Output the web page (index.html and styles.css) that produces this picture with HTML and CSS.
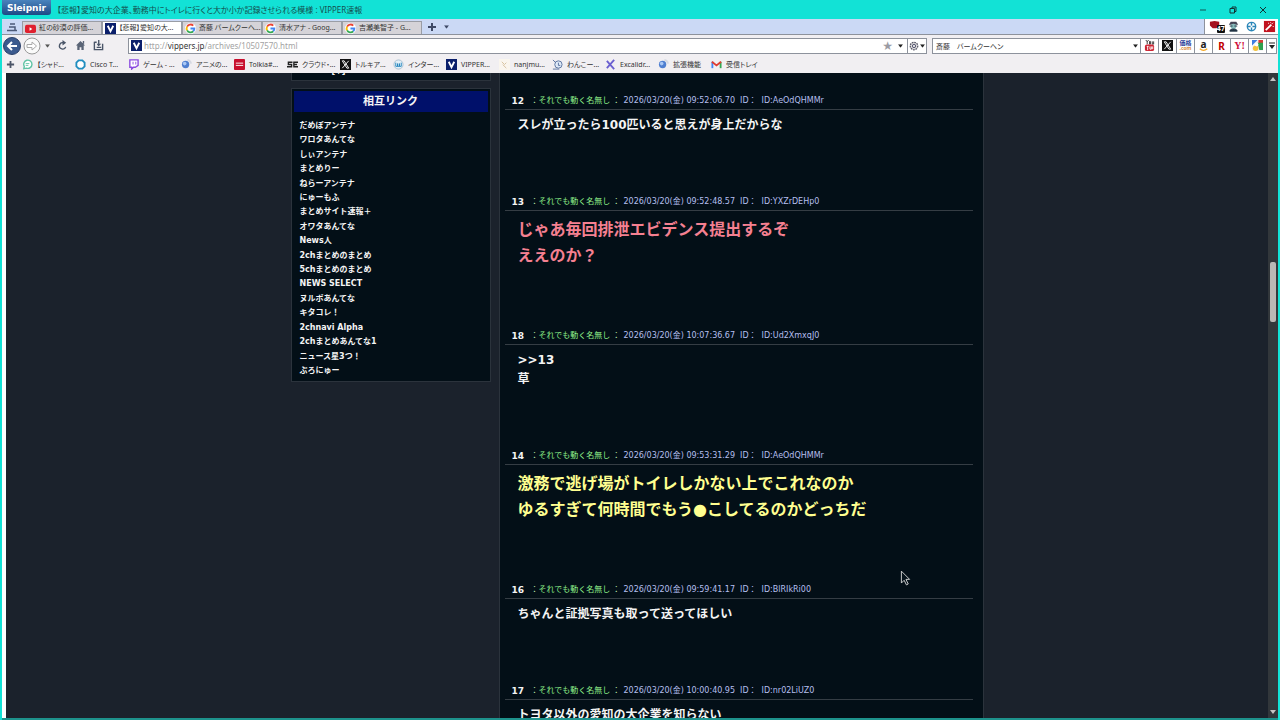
FILE: index.html
```
<!DOCTYPE html>
<html lang="ja">
<head>
    <meta charset="UTF-8">
    <meta name="viewport" content="width=device-width, initial-scale=1.0">
    <title>【悲報】愛知の大企業、勤務中にトイレに行くと大か小か記録させられる模様 : VIPPER速報</title>
    <link rel="stylesheet" href="styles.css">
</head>
<body>
    <!-- shared icons -->
    <svg class="sprite" aria-hidden="true">
        <symbol id="google" viewBox="0 0 12 12">
            <circle cx="6" cy="6" r="6" fill="#fff"/>
            <path d="M9 2.9A4.2 4.2 0 0 0 2.3 4" fill="none" stroke="#ea4335" stroke-width="2"/>
            <path d="M2.3 4a4.2 4.2 0 0 0 0 4" fill="none" stroke="#fbbc05" stroke-width="2"/>
            <path d="M2.3 8A4.2 4.2 0 0 0 9 9" fill="none" stroke="#34a853" stroke-width="2"/>
            <path d="M6 6h4.2A4.2 4.2 0 0 1 9 9" fill="none" stroke="#4285f4" stroke-width="2"/>
        </symbol>
        <symbol id="vipper" viewBox="0 0 12 12">
            <rect width="12" height="12" fill="#0b1f6b"/>
            <path d="M3 3l3 6 3-6" fill="none" stroke="#fff" stroke-width="2"/>
        </symbol>
        <symbol id="xlogo" viewBox="0 0 12 12">
            <rect width="12" height="12" fill="#111"/>
            <path d="M2.5 2h2l5 8h-2z" fill="none" stroke="#fff"/>
            <path d="M9.5 2L2.5 10" stroke="#fff"/>
        </symbol>
        <symbol id="orb" viewBox="0 0 12 12">
            <circle cx="5" cy="6" r="4" fill="#4f7fd0"/>
            <circle cx="4" cy="5" r="2" fill="#a9c8f5"/>
            <path d="M7 1a5 5 0 0 1 4 4" fill="none" stroke="#d5d9e2" stroke-width="2"/>
        </symbol>
        <symbol id="caret" viewBox="0 0 6 4">
            <path d="M0 0h6L3 4z" fill="currentColor"/>
        </symbol>
        <symbol id="plus" viewBox="0 0 10 10">
            <path d="M5 1v8M1 5h8" stroke="currentColor" stroke-width="2"/>
        </symbol>
    </svg>

    <header class="titlebar">
        <button class="brand" type="button">Sleipnir</button>
        <span class="window-title">【悲報】愛知の大企業、勤務中にトイレに行くと大か小か記録させられる模様 : VIPPER速報</span>
        <div class="window-buttons">
            <button type="button" aria-label="最小化"><svg viewBox="0 0 8 8"><path d="M1 4h6" stroke="#155" fill="none"/></svg></button>
            <button type="button" aria-label="元に戻す"><svg viewBox="0 0 8 8"><path d="M1 2.5h4.5V7H1zM3 2.5V1h4v4.500H5.500" stroke="#133" fill="none"/></svg></button>
            <button type="button" aria-label="閉じる"><svg viewBox="0 0 8 8"><path d="M1 1l6 6M7 1L1 7" stroke="#133" fill="none"/></svg></button>
        </div>
    </header>

    <div class="tabbar">
        <button class="tab-menu" type="button" aria-label="タブ一覧"><svg viewBox="0 0 10 10"><path d="M3 2h5M2 5h6v3M0 8.500h10" stroke="#4c5a78" stroke-width="1.500" fill="none"/></svg></button>
        <nav class="tabs">
            <a class="tab" href="#"><svg class="icon" viewBox="0 0 12 12"><rect y="2" width="12" height="9" rx="2" fill="#e0202f"/><path d="M5 4.500l3 2-3 2z" fill="#fff"/></svg>紅の砂漠の評価...</a>
            <a class="tab active" href="#"><svg class="icon"><use href="#vipper"/></svg>【悲報】愛知の大...</a>
            <a class="tab" href="#"><svg class="icon"><use href="#google"/></svg>斎藤 バームクーヘ...</a>
            <a class="tab" href="#"><svg class="icon"><use href="#google"/></svg>清水アナ - Goog...</a>
            <a class="tab" href="#"><svg class="icon"><use href="#google"/></svg>吉瀬美智子 - G...</a>
        </nav>
        <button class="tab-new" type="button" aria-label="新しいタブ"><svg viewBox="0 0 10 10"><use href="#plus"/></svg></button>
        <button class="tab-more" type="button" aria-label="タブメニュー"><svg viewBox="0 0 6 4"><use href="#caret"/></svg></button>
        <div class="extensions">
            <button type="button" aria-label="広告ブロック"><svg viewBox="0 0 14 14"><path d="M1 2l5-1 5 1v4L8 9H4L1 6z" fill="#a5121f"/></svg><span class="badge">47</span></button>
            <button type="button" aria-label="ユーザーエージェント"><svg viewBox="0 0 14 14"><path d="M2 5l2-3h6l2 3z" fill="#445"/><circle cx="7" cy="7" r="3" fill="#8bb"/><path d="M3 6.500h3M8 6.500h3M3 12c0-3 8-3 8 0z" stroke="#234" fill="#234"/></svg></button>
            <button type="button" aria-label="ターゲット"><svg viewBox="0 0 14 14"><circle cx="7" cy="7" r="4.500" fill="#fff" stroke="#2b86b8" stroke-width="1.500"/><path d="M7 3v3M7 8v3M3 7h3M8 7h3" stroke="#2b86b8" stroke-width="1.500"/></svg></button>
            <button type="button" aria-label="ウィザード"><svg viewBox="0 0 14 14"><rect x="1" y="1" width="12" height="12" fill="#c1121f"/><path d="M3 11l6-6" stroke="#fff" stroke-width="2"/><path d="M8 2.500l1 1M11 3l-1 1M10.500 6.500l1 1M5.500 3.500h1" stroke="#fff"/></svg></button>
        </div>
    </div>

    <div class="toolbar">
        <div class="nav-buttons">
            <button class="back" type="button" aria-label="戻る"><svg viewBox="0 0 18 18"><circle cx="9" cy="9" r="8.500" fill="#3b5a8e" stroke="#2a416a"/><path d="M14 9H5M9 5L5 9l4 4" stroke="#fff" stroke-width="2" fill="none"/></svg></button>
            <button class="forward" type="button" aria-label="進む"><svg viewBox="0 0 18 18"><circle cx="9" cy="9" r="8" fill="#fafafa" stroke="#999"/><path d="M4 7.500h5V5l4.500 4L9 13v-2.500H4z" fill="#fff" stroke="#aaa"/></svg></button>
            <button class="history" type="button" aria-label="履歴"><svg viewBox="0 0 6 4"><use href="#caret"/></svg></button>
            <button type="button" aria-label="再読み込み"><svg viewBox="0 0 12 12"><path d="M9.500 7.500A3.500 3.500 0 1 1 7 3" fill="none" stroke="#4a5568" stroke-width="1.500"/><path d="M6 0l4 3-4 3z" fill="#4a5568"/></svg></button>
            <button type="button" aria-label="ホーム"><svg viewBox="0 0 12 12"><path d="M6 1l5 5H9.500v5H7V8H5v3H2.500V6H1zM8.500 1h1.500v3H8.500z" fill="#5a6476"/></svg></button>
            <button type="button" aria-label="保存"><svg viewBox="0 0 12 12"><path d="M1.500 2v8.500h9V4M1.500 2.500H4M4 8h5" fill="none" stroke="#4a5568" stroke-width="1.500"/><path d="M7 0v4h2L6 7 4 4h1.500V0z" fill="#4a5568"/></svg></button>
        </div>
        <div class="address">
            <svg class="icon"><use href="#vipper"/></svg>
            <div class="url" role="textbox" aria-label="アドレス">http://<b>vippers.jp</b>/archives/10507570.html</div>
            <button class="star" type="button" aria-label="お気に入り">★</button>
            <button class="drop" type="button" aria-label="アドレス履歴"><svg viewBox="0 0 6 4"><use href="#caret"/></svg></button>
            <button class="engine" type="button" aria-label="エンジン"><svg class="gear" viewBox="0 0 12 12"><circle cx="6" cy="6" r="4.500" fill="#ddd" stroke="#556" stroke-width="1.500" stroke-dasharray="2 1"/><circle cx="6" cy="6" r="2" fill="none" stroke="#446" /></svg><svg class="arrow" viewBox="0 0 6 4"><use href="#caret"/></svg></button>
        </div>
        <div class="search">
            <input type="text" aria-label="検索" value="斎藤　バームクーヘン">
            <button class="drop" type="button" aria-label="検索履歴"><svg viewBox="0 0 6 4"><use href="#caret"/></svg></button>
            <button class="site" type="button" aria-label="YouTube"><svg viewBox="0 0 12 12"><path d="M2 0l1.500 2v2.500M5 0L3.500 2M6 1.500h1v3H6zM9 1.500v3h1.500v-3" stroke="#333" fill="none"/><rect x="1" y="5" width="10" height="7" rx="2" fill="#cc2433"/><path d="M3 7h2M4 7v4M6.500 7v3h1.500V7M9.500 7v3" stroke="#fff" fill="none"/></svg></button>
            <button class="site" type="button" aria-label="X"><svg viewBox="0 0 12 12"><use href="#xlogo"/></svg></button>
            <button class="site kakaku" type="button">価格<small>.com</small></button>
            <button class="site amazon" type="button" aria-label="Amazon">a<svg viewBox="0 0 12 4"><path d="M1 1c3 2.500 7 2.500 10 0" stroke="#f5a623" fill="none" stroke-width="1.500"/></svg></button>
            <button class="site rakuten" type="button">R</button>
            <button class="site yahoo" type="button">Y!</button>
            <button class="site" type="button" aria-label="Google"><svg viewBox="0 0 12 12"><rect width="12" height="12" fill="#f5f5f5"/><path d="M0 6V0h6z" fill="#3d7de0"/><path d="M7 0h5v4H7z" fill="#db3a34"/><path d="M6 3h6v8H8z" fill="#2fa04e"/><circle cx="4" cy="9" r="3" fill="#f3c13a"/><circle cx="5" cy="5" r="2" fill="#fff"/></svg></button>
            <button class="overflow" type="button" aria-label="その他"><svg viewBox="0 0 6 8"><path d="M0 1h6" stroke="#222"/><path d="M0 3h6L3 7z" fill="#222"/></svg></button>
        </div>
    </div>

    <nav class="bookmarks">
        <button type="button" aria-label="追加"><svg viewBox="0 0 10 10"><use href="#plus"/></svg></button>
        <a href="#"><svg class="icon" viewBox="0 0 12 12"><path d="M2 10.500L2.500 8A4.500 4.500 0 1 1 5 10z" fill="#fff" stroke="#5fc3a4" stroke-width="1.500"/><path d="M4 5h4M4 7h3" stroke="#5fc3a4"/></svg>【シャド...</a>
        <a href="#"><svg class="icon" viewBox="0 0 12 12"><path d="M4 1.500h4L10.500 4v4L8 10.500H4L1.500 8V4z" fill="#fff" stroke="#1f8dbf" stroke-width="2"/></svg>Cisco T...</a>
        <a href="#"><svg class="icon" viewBox="0 0 12 12"><path d="M2 1h9v6L8 9H6l-2 2V9H2z" fill="#fff" stroke="#8a4be0" stroke-width="1.500"/><path d="M5.500 3v3M8.500 3v3" stroke="#8a4be0"/></svg>ゲーム - ...</a>
        <a href="#"><svg class="icon"><use href="#orb"/></svg>アニメの...</a>
        <a href="#"><svg class="icon" viewBox="0 0 12 12"><rect width="12" height="12" rx="1" fill="#c8102e"/><path d="M2 4.500h8M2 7h8" stroke="#fff"/></svg>Tolkia#...</a>
        <a href="#"><svg class="icon" viewBox="0 0 12 12"><path d="M6 3.500H1.500V6H5v2.500H0M12 3.500H7.500v5H12M8 6h3" stroke="#222" stroke-width="1.500" fill="none"/></svg>クラウド・...</a>
        <a href="#"><svg class="icon"><use href="#xlogo"/></svg>トルキア...</a>
        <a href="#"><svg class="icon" viewBox="0 0 12 12"><circle cx="6" cy="6" r="5" fill="#e3f0f8" stroke="#a8bfd0"/><path d="M3 4v4h2V5v3h2V5v3h2V4" stroke="#2585bd" fill="none"/></svg>インター...</a>
        <a href="#"><svg class="icon"><use href="#vipper"/></svg>VIPPER...</a>
        <a href="#"><svg class="icon" viewBox="0 0 12 12"><rect width="12" height="12" fill="#faf6ee"/><path d="M3 3l3 3 2-2M4 6l4 4" stroke="#d5bf9b" fill="none"/></svg>nanjmu...</a>
        <a href="#"><svg class="icon" viewBox="0 0 12 12"><circle cx="7" cy="6" r="4" fill="#dfeaf8" stroke="#56709c"/><path d="M1 1l3 3M1 11h7M7 4v3h2" stroke="#56709c" fill="none"/></svg>わんこー...</a>
        <a href="#"><svg class="icon" viewBox="0 0 12 12"><path d="M2 2l8 9M10 1L2 10" stroke="#6a5fd0" stroke-width="2"/></svg>Excalidr...</a>
        <a href="#"><svg class="icon"><use href="#orb"/></svg>拡張機能</a>
        <a href="#"><svg class="icon" viewBox="0 0 12 12"><path d="M1.500 10V3" stroke="#4285f4" stroke-width="2"/><path d="M10.500 10V3" stroke="#34a853" stroke-width="2"/><path d="M1 3l5 4 5-4" stroke="#e03c31" stroke-width="2" fill="none"/></svg>受信トレイ</a>
    </nav>

    <div class="viewport">
        <div class="page">
            <aside class="sidebar">
                <section class="widget widget-prev"><p>[+]</p></section>
                <section class="widget">
                    <h2>相互リンク</h2>
                    <ul>
                        <li><a href="#">だめぽアンテナ</a></li>
                        <li><a href="#">ワロタあんてな</a></li>
                        <li><a href="#">しぃアンテナ</a></li>
                        <li><a href="#">まとめりー</a></li>
                        <li><a href="#">ねらーアンテナ</a></li>
                        <li><a href="#">にゅーもふ</a></li>
                        <li><a href="#">まとめサイト速報＋</a></li>
                        <li><a href="#">オワタあんてな</a></li>
                        <li><a href="#">News人</a></li>
                        <li><a href="#">2chまとめのまとめ</a></li>
                        <li><a href="#">5chまとめのまとめ</a></li>
                        <li><a href="#">NEWS SELECT</a></li>
                        <li><a href="#">ヌルポあんてな</a></li>
                        <li><a href="#">キタコレ！</a></li>
                        <li><a href="#">2chnavi Alpha</a></li>
                        <li><a href="#">2chまとめあんてな1</a></li>
                        <li><a href="#">ニュース星3つ！</a></li>
                        <li><a href="#">ぶろにゅー</a></li>
                    </ul>
                </section>
            </aside>

            <main class="thread">
                <article class="post">
                    <h3><b>12</b><span class="name">：<em>それでも動く名無し</em>：</span><span class="meta"><span>2026/03/20(金) 09:52:06.70</span><span>ID：</span><span>ID:AeOdQHMMr</span></span></h3>
                    <p>スレが立ったら100匹いると思えが身上だからな</p>
                </article>
                <article class="post">
                    <h3><b>13</b><span class="name">：<em>それでも動く名無し</em>：</span><span class="meta"><span>2026/03/20(金) 09:52:48.57</span><span>ID：</span><span>ID:YXZrDEHp0</span></span></h3>
                    <p class="large pink">じゃあ毎回排泄エビデンス提出するぞ<br>ええのか？</p>
                </article>
                <article class="post">
                    <h3><b>18</b><span class="name">：<em>それでも動く名無し</em>：</span><span class="meta"><span>2026/03/20(金) 10:07:36.67</span><span>ID：</span><span>ID:Ud2XmxqJ0</span></span></h3>
                    <p>&gt;&gt;13<br>草</p>
                </article>
                <article class="post">
                    <h3><b>14</b><span class="name">：<em>それでも動く名無し</em>：</span><span class="meta"><span>2026/03/20(金) 09:53:31.29</span><span>ID：</span><span>ID:AeOdQHMMr</span></span></h3>
                    <p class="large yellow">激務で逃げ場がトイレしかない上でこれなのか<br>ゆるすぎて何時間でもう●こしてるのかどっちだ</p>
                </article>
                <article class="post">
                    <h3><b>16</b><span class="name">：<em>それでも動く名無し</em>：</span><span class="meta"><span>2026/03/20(金) 09:59:41.17</span><span>ID：</span><span>ID:BlRIkRi00</span></span></h3>
                    <p>ちゃんと証拠写真も取って送ってほしい</p>
                </article>
                <article class="post">
                    <h3><b>17</b><span class="name">：<em>それでも動く名無し</em>：</span><span class="meta"><span>2026/03/20(金) 10:00:40.95</span><span>ID：</span><span>ID:nr02LiUZ0</span></span></h3>
                    <p>トヨタ以外の愛知の大企業を知らない</p>
                </article>
            </main>
        </div>
        <div class="scrollbar">
            <svg viewBox="0 0 6 4"><path d="M0 4h6L3 0z" fill="#c4c4c4"/></svg>
            <span class="thumb"></span>
            <svg viewBox="0 0 6 4"><path d="M0 0h6L3 4z" fill="#c4c4c4"/></svg>
        </div>
    </div>

    <svg class="cursor" viewBox="0 0 12 18" aria-hidden="true"><path d="M1.500 1.500v13l3-3 2.500 5 2-1-2.500-5h4z" fill="#06131b" stroke="#d8d8d8"/></svg>
</body>
</html>
```
FILE: styles.css
```
:root {
    --teal: #12e2d6;
    --page: #1b222c;
    --panel: #030f17;
    --chrome: #f1eff2;
    --line: #8d929c;
    --ui-font: "Noto Sans", "Noto Sans CJK JP", sans-serif;
    --page-font: "DejaVu Sans", "Noto Sans CJK JP", sans-serif;
}

* {
    box-sizing: border-box;
    margin: 0;
    padding: 0;
}

body {
    display: flex;
    flex-direction: column;
    height: 100vh;
    overflow: hidden;
    border: solid var(--teal);
    border-width: 0 2px 0 2px;
    background: var(--chrome);
    color: #333;
    font-family: var(--ui-font);
    font-size: 8px;
    line-height: 12px;
    font-feature-settings: "palt";
    white-space: nowrap;
}

button {
    display: flex;
    align-items: center;
    justify-content: center;
    border: 0;
    background: none;
    color: inherit;
    font: inherit;
}

a {
    color: inherit;
    text-decoration: none;
}

svg {
    display: block;
    flex: none;
}

.sprite {
    position: absolute;
    width: 0;
    height: 0;
}

.icon {
    width: 11px;
    height: 11px;
}

/* title bar */
.titlebar {
    display: flex;
    align-items: center;
    height: 19px;
    background: var(--teal);
    color: #14504f;
}

.brand {
    align-self: flex-start;
    width: 49px;
    height: 15px;
    border-radius: 0 0 3px 3px;
    background: linear-gradient(#4a83bd, #1d4a86);
    color: #fff;
    font-family: "DejaVu Sans", sans-serif;
    font-size: 9px;
    font-weight: 700;
}

.window-title {
    flex: 1;
    margin-left: 6px;
}

.window-buttons {
    display: flex;
}

.window-buttons button {
    width: 30px;
}

.window-buttons svg {
    width: 8px;
    height: 8px;
}

/* tabs */
.tabbar {
    display: flex;
    align-items: flex-end;
    height: 16px;
    background: #cbd9f5;
    border-bottom: 1px solid var(--line);
    color: #3f4a66;
}

.tabbar button {
    height: 14px;
}

.tab-menu {
    width: 20px;
}

.tab-menu svg,
.tab-new svg {
    width: 10px;
    height: 10px;
}

.tabs {
    display: flex;
}

.tab {
    display: flex;
    align-items: center;
    gap: 3px;
    width: 80px;
    height: 13px;
    padding-left: 2px;
    border: 1px solid #9a9da5;
    border-bottom: 0;
    background: #d5d3d8;
    color: #333;
    font-size: 7px;
}

.tab.active {
    background: #fff;
}

.tab-new {
    width: 20px;
}

.tab-more {
    width: 8px;
}

.tab-more svg,
.history svg,
.drop svg,
.arrow {
    width: 5px;
    height: 4px;
}

.extensions {
    display: flex;
    align-self: stretch;
    width: 74px;
    margin-left: auto;
    padding-left: 2px;
    border-left: 1px solid var(--line);
    background: #fff;
}

.extensions button {
    position: relative;
    flex: 1;
}

.extensions svg {
    width: 13px;
    height: 13px;
}

.badge {
    position: absolute;
    right: 0;
    bottom: 0;
    border-radius: 1px;
    background: #111;
    color: #fff;
    font-size: 7px;
    font-weight: 700;
    line-height: 8px;
}

/* address row */
.toolbar {
    display: flex;
    align-items: center;
    height: 21px;
    padding: 0 1px;
}

.nav-buttons {
    display: flex;
    align-items: center;
    width: 125px;
    color: #555;
}

.nav-buttons button {
    width: 18px;
    height: 18px;
}

.nav-buttons svg {
    width: 11px;
    height: 11px;
}

.nav-buttons .back svg,
.nav-buttons .forward svg {
    width: 18px;
    height: 18px;
}

.nav-buttons .forward {
    margin-left: 2px;
}

.nav-buttons .history {
    width: 12px;
}

.nav-buttons .history svg {
    width: 5px;
    height: 4px;
}

.address,
.search {
    display: flex;
    align-items: center;
    height: 16px;
    border: 1px solid var(--line);
    background: #fff;
}

.address {
    flex: 1;
    gap: 2px;
    padding-left: 2px;
}

.url {
    flex: 1;
    color: #a3a3a3;
}

.url b {
    color: #333;
    font-weight: 400;
}

.star {
    color: #9b9ba3;
    font-family: "DejaVu Sans", sans-serif;
    font-size: 12px;
}

.drop {
    width: 10px;
    height: 14px;
    color: #222;
}

.engine {
    gap: 1px;
    width: 19px;
    height: 14px;
    border-left: 1px solid var(--line);
    color: #222;
}

.gear {
    width: 10px;
    height: 10px;
}

.search {
    margin-left: 5px;
}

.search input {
    width: 197px;
    height: 14px;
    padding-left: 3px;
    border: 0;
    outline: 0;
    background: none;
    color: #333;
    font-family: inherit;
    font-size: 7px;
    font-feature-settings: inherit;
}

.site {
    flex-direction: column;
    width: 18px;
    height: 14px;
    border-left: 1px solid var(--line);
}

.site svg {
    width: 11px;
    height: 11px;
}

.kakaku {
    color: #2b3f9c;
    font-size: 6px;
    font-weight: 700;
    line-height: 6px;
}

.kakaku small {
    color: #d98a3a;
    font-size: 5px;
    line-height: 5px;
}

.amazon {
    color: #222;
    font-size: 10px;
    font-weight: 700;
    line-height: 8px;
}

.amazon svg {
    width: 9px;
    height: 3px;
}

.rakuten {
    color: #bf0000;
    font-size: 10px;
    font-weight: 700;
}

.yahoo {
    color: #d0103a;
    font-family: "Liberation Serif", serif;
    font-size: 10px;
    font-weight: 700;
}

.overflow {
    width: 10px;
    height: 14px;
    border-left: 1px solid var(--line);
}

.overflow svg {
    width: 6px;
    height: 8px;
}

/* bookmarks */
.bookmarks {
    display: flex;
    align-items: center;
    height: 17px;
    font-size: 7px;
}

.bookmarks button {
    width: 16px;
    margin-right: 4px;
    color: #4c5568;
}

.bookmarks button svg {
    width: 9px;
    height: 9px;
}

.bookmarks a {
    display: flex;
    align-items: center;
    gap: 4px;
    width: 53px;
}

/* web page */
.viewport {
    display: flex;
    flex: 1;
    min-height: 0;
    padding-left: 4px;
    background: linear-gradient(90deg, #fff 4px, var(--page) 4px);
    border-bottom: 2px solid #1d928c;
    font-family: var(--page-font);
    font-feature-settings: normal;
}

.page {
    display: flex;
    flex: 1;
    align-items: flex-start;
    justify-content: center;
    gap: 8px;
    min-height: 0;
    overflow: hidden;
}

.sidebar {
    width: 200px;
}

.widget {
    margin-bottom: 7px;
    padding: 2px;
    border: 1px solid #2b333c;
    background: var(--panel);
    color: #f4f4f4;
    font-weight: 700;
}

.widget-prev {
    display: flex;
    align-items: flex-end;
    justify-content: center;
    height: 8px;
    padding-right: 106px;
    padding-bottom: 4px;
    border-top: 0;
    overflow: hidden;
    line-height: 8px;
}

.widget h2 {
    background: #00106a;
    font-size: 11px;
    line-height: 21px;
    text-align: center;
}

.widget ul {
    display: grid;
    align-content: space-between;
    min-height: 267px;
    padding: 7px 6px 1px;
    list-style: none;
}

.widget li {
    line-height: 14px;
}

.thread {
    width: 485px;
    padding: 20px 10px 0 5px;
    border: solid #2b333c;
    border-width: 0 1px;
    background: var(--panel);
}

.post {
    padding-bottom: 59px;
}

.post h3 {
    display: flex;
    padding-left: 7px;
    border-bottom: 1px solid #353d44;
    font-size: 8px;
    font-weight: 400;
    line-height: 16px;
}

.post h3 b {
    width: 19px;
    color: #f4f4f4;
    font-size: 9px;
}

.name {
    width: 93px;
    color: #b9e8a9;
}

.name em {
    margin-right: 2px;
    color: #8ff08a;
    font-style: normal;
}

.meta {
    display: flex;
    gap: 5px;
    color: #b5bfee;
}

.post p {
    padding: 6px 13px 0;
    color: #f4f4f4;
    font-size: 12px;
    font-weight: 700;
    line-height: 19px;
}

.post p.large {
    font-size: 16px;
    line-height: 26px;
}

.post .pink {
    color: #f58091;
}

.post .yellow {
    color: #ffff90;
}

.scrollbar {
    position: relative;
    display: flex;
    flex-direction: column;
    align-items: center;
    justify-content: space-between;
    width: 10px;
    padding: 4px 0;
    background: #32373b;
}

.scrollbar svg {
    width: 6px;
    height: 4px;
}

.thumb {
    position: absolute;
    top: 189px;
    width: 6px;
    height: 60px;
    border-radius: 2px;
    background: #b9b7b5;
}

.cursor {
    position: absolute;
    top: 569px;
    left: 900px;
    width: 11px;
    height: 18px;
}
```
